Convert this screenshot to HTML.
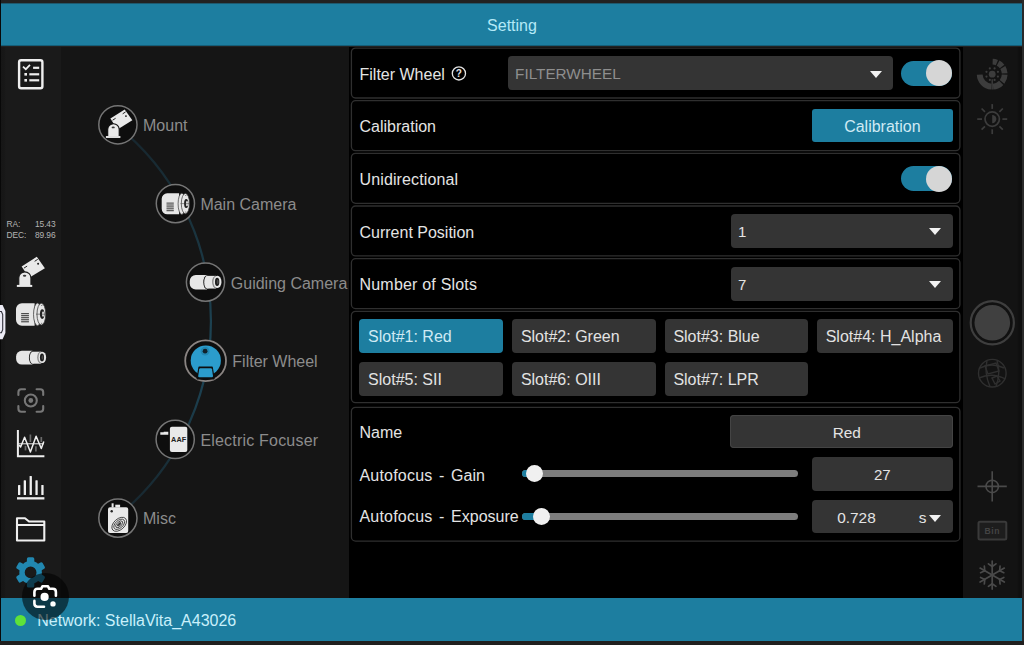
<!DOCTYPE html>
<html><head><meta charset="utf-8"><title>Setting</title>
<style>
*{box-sizing:border-box;margin:0;padding:0}
html,body{width:1024px;height:645px;overflow:hidden;background:#222;font-family:"Liberation Sans",sans-serif;}
#app{position:absolute;left:0;top:0;width:1024px;height:645px;overflow:hidden;background:#222}
.abs{position:absolute}
#hdr{left:1px;top:3px;width:1021px;height:43px;background:#1d7ea0;color:#b4e9f7;font-size:16px;text-align:center;line-height:45.2px;padding-left:1px;box-shadow:inset 0 1px 0 rgba(35,35,35,.4),inset 0 -1px 0 rgba(0,0,0,.25)}
#ftr{left:1px;top:598.2px;width:1021px;height:43.2px;background:#1d7ea0;color:#c9f0fb;font-size:16px;line-height:43px}
#lside{left:1px;top:46.5px;width:59.5px;height:552px;background:linear-gradient(90deg,#161616 0,#171717 3px,#1a1a1a 5px)}
#tree{left:60.5px;top:46.5px;width:288.5px;height:552px;background:#151515;overflow:hidden}
#main{left:349px;top:46.5px;width:614px;height:552px;background:#000}
#rside{left:963px;top:46.5px;width:59px;height:552px;background:linear-gradient(90deg,#131313 0,#131313 54px,#0f0f0f 56px)}
.panel{position:absolute;left:351px;width:609.5px;border:1px solid #2e2e2e;border-radius:5px;background:#000}
.lbl{position:absolute;left:359.5px;color:#e4e4e4;font-size:16px;line-height:20px;white-space:nowrap}
.box{position:absolute;background:#343434;border-radius:4px;color:#e4e4e4;font-size:16px}
.tri{position:absolute;width:0;height:0;border-left:6.7px solid transparent;border-right:6.7px solid transparent;border-top:7px solid #f2f2f2}
.tog{position:absolute;width:51.5px;height:25px;border-radius:13px;background:#1d7ea0}
.tog i{position:absolute;right:0;top:-0.5px;width:26px;height:26px;border-radius:13px;background:#d6d6d6}
.slot{position:absolute;height:33.9px;border-radius:4px;background:#343434;color:#e2e2e2;font-size:16px;line-height:33.6px;padding-left:8.7px;white-space:nowrap}
.node{position:absolute;color:#8c8c8c;font-size:16px;line-height:20px;white-space:nowrap}
</style></head><body>
<div id="app">
<div class="abs" style="left:0;top:0;width:1px;height:645px;background:#080808"></div>
<div class="abs" style="left:1022px;top:0;width:2px;height:645px;background:#2a2a2a"></div>
<div class="abs" style="left:0;top:641.4px;width:1024px;height:4px;background:#201f1e"></div>
<div id="hdr" class="abs">Setting</div>
<div id="lside" class="abs"></div>
<div id="tree" class="abs"></div>

<!-- tree -->
<svg class="abs" style="left:60px;top:46px" width="289" height="553" viewBox="60 46 289 553">
<defs><linearGradient id="ag" gradientUnits="userSpaceOnUse" x1="0" y1="124" x2="0" y2="518">
<stop offset="0" stop-color="#17252d"/><stop offset="0.2" stop-color="#193039"/><stop offset="0.4" stop-color="#1b3a48"/><stop offset="0.55" stop-color="#1d4454"/><stop offset="0.68" stop-color="#1c4050"/><stop offset="0.85" stop-color="#19303a"/><stop offset="1" stop-color="#17252d"/></linearGradient></defs>
<path d="M115.9 124.8 A 250.5 250.5 0 0 1 115.3 518.1" fill="none" stroke="url(#ag)" stroke-width="2.2"/>
<circle cx="117.9" cy="124.8" r="19.1" fill="#0e0e0e" stroke="#757575" stroke-width="1.5"/>
<circle cx="175.4" cy="203.6" r="19.1" fill="#0e0e0e" stroke="#757575" stroke-width="1.5"/>
<circle cx="205.5" cy="282.1" r="19.1" fill="#0e0e0e" stroke="#757575" stroke-width="1.5"/>
<circle cx="205.6" cy="360.7" r="20.4" fill="#0e0e0e" stroke="#8a8482" stroke-width="1.8"/>
<circle cx="175.2" cy="439.4" r="19.1" fill="#0e0e0e" stroke="#757575" stroke-width="1.5"/>
<circle cx="117.9" cy="518.1" r="19.1" fill="#0e0e0e" stroke="#757575" stroke-width="1.5"/>
<g transform="translate(118.3 125.2)">
<polygon points="-7.9,-6.6 6.4,-15.8 14.05,-4.85 -0.85,4.2" fill="#e9e9e9"/>
<path d="M-5.7 -5.0 L-2.7 -6.9 M4.4 -11.4 L7.3 -13.3" stroke="#0e0e0e" stroke-width="0.9" fill="none"/>
<circle cx="7.65" cy="-9.1" r="0.95" fill="#1c1c1c"/>
<path d="M-10.6 11.4 V4.35 A5.75 5.75 0 0 1 0.9 4.35 V11.4 Z" fill="#e9e9e9" stroke="#0e0e0e" stroke-width="1.1"/>
<rect x="-12.4" y="10.85" width="14.5" height="1.9" fill="#e9e9e9"/>
<ellipse cx="-5.1" cy="2.2" rx="1.6" ry="0.9" fill="#383838"/>
</g><g transform="translate(176.1 203.8)">
<path d="M-8.9 -10.5 H3 V10.5 H-8.9 A5.5 5.5 0 0 1 -14.4 5 V-5 A5.5 5.5 0 0 1 -8.9 -10.5 Z" fill="#e6e6e6"/>
<rect x="-9.6" y="-1.20" width="7.3" height="1.0" fill="#3a3a3a"/><rect x="-9.6" y="0.70" width="7.3" height="1.0" fill="#3a3a3a"/><rect x="-9.6" y="2.60" width="7.3" height="1.0" fill="#3a3a3a"/><rect x="-9.6" y="4.50" width="7.3" height="1.0" fill="#3a3a3a"/><rect x="-9.6" y="6.40" width="7.3" height="1.0" fill="#3a3a3a"/>
<ellipse cx="5.7" cy="0" rx="3.7" ry="10.6" fill="#e6e6e6" stroke="#333" stroke-width="0.7"/>
<ellipse cx="9.3" cy="-0.2" rx="4.1" ry="10.2" fill="#e6e6e6" stroke="#333" stroke-width="0.7"/>
<ellipse cx="10.1" cy="-0.3" rx="2.1" ry="4.5" fill="#222"/>
<ellipse cx="10.9" cy="-0.3" rx="1.05" ry="2.7" fill="#ddd"/>
<path d="M4.4 -0.2 H13.6" stroke="#333" stroke-width="0.5"/>
<circle cx="9.7" cy="-8.4" r="0.5" fill="#444"/><circle cx="9.7" cy="8.3" r="0.5" fill="#444"/>
</g><g transform="translate(205.5 282.2) scale(1.058)">
<path d="M-9.2 -6.85 H1.4 V6.85 H-9.2 A5.7 5.7 0 0 1 -14.9 1.15 V-1.15 A5.7 5.7 0 0 1 -9.2 -6.85 Z" fill="#e6e6e6"/>
<ellipse cx="1.4" cy="0" rx="3.5" ry="6.6" fill="#1c1c1c"/>
<rect x="1.6" y="-6" width="8.2" height="12" fill="#e6e6e6"/>
<ellipse cx="1.6" cy="0" rx="2.8" ry="6" fill="#e6e6e6"/>
<ellipse cx="9.8" cy="-0.2" rx="3.6" ry="6" fill="#8a8a8a"/>
<ellipse cx="11.3" cy="-0.3" rx="3.8" ry="5.7" fill="#e6e6e6"/>
<ellipse cx="11" cy="-0.3" rx="2.05" ry="3.9" fill="#1c1c1c"/>
<ellipse cx="11.5" cy="-0.3" rx="0.9" ry="2.2" fill="#4a4a4a"/>
</g><g transform="translate(205.6 360.7)">
<circle cx="0.2" cy="-0.2" r="15.1" fill="#2b9ccc"/>
<circle cx="-0.5" cy="-9.5" r="4.4" fill="#2288b3"/>
<circle cx="-0.5" cy="-9.5" r="2.4" fill="#10222b"/>
<path d="M-6.5 6.5 H6.5 L8.4 18 H-8.4 Z" fill="#0e0e0e" stroke="#0e0e0e" stroke-width="1.4" stroke-linejoin="round"/>
<path d="M-5.3 7.6 H5.3 Q6.2 7.6 6.4 8.6 L7.4 15.4 Q7.5 16.6 6.3 16.6 H-6.3 Q-7.5 16.6 -7.4 15.4 L-6.4 8.6 Q-6.2 7.6 -5.3 7.6 Z" fill="#2b9ccc"/>
</g><g transform="translate(175.2 439.4)">
<rect x="-5.3" y="-12.7" width="17.4" height="25.3" rx="2" fill="#e9e9e9"/>
<text x="3.4" y="2.7" font-family="Liberation Sans, sans-serif" font-weight="bold" font-size="7.3" text-anchor="middle" fill="#222">AAF</text>
<path d="M-14.9 -7.1 H-11.5 V-7.7 H-6.9 V-4.6 H-14.9 Z" fill="#e9e9e9"/>
</g><g transform="translate(117.9 518.1)">
<rect x="-9.9" y="-10.8" width="20.2" height="25.8" rx="2" fill="#e9e9e9"/>
<rect x="-6.3" y="-14.8" width="2" height="4.2" fill="#e9e9e9"/>
<rect x="-2.6" y="-13.4" width="4.8" height="2.8" fill="#e9e9e9"/>
<circle cx="-6.2" cy="-6.8" r="1.2" fill="#222"/>
<g transform="translate(1.3 6.2) rotate(-42)" fill="none" stroke="#2a2a2a" stroke-width="0.8">
<ellipse rx="8.6" ry="5.4"/><ellipse rx="6.4" ry="3.8"/><ellipse rx="4.3" ry="2.3"/><ellipse rx="2.2" ry="0.9" fill="#444"/></g>
</g>
</svg>
<div class="node" style="left:143.0px;top:115.8px">Mount</div>
<div class="node" style="left:200.4px;top:194.8px">Main Camera</div>
<div class="node" style="left:230.8px;top:273.6px">Guiding Camera</div>
<div class="node" style="left:232.3px;top:351.8px">Filter Wheel</div>
<div class="node" style="left:200.4px;top:430.6px;letter-spacing:.2px">Electric Focuser</div>
<div class="node" style="left:143.0px;top:508.8px">Misc</div>


<div id="main" class="abs"></div>
<div id="rside" class="abs"></div>
<div id="ftr" class="abs"></div>

<!-- panels -->
<svg class="abs" style="left:349px;top:46px" width="614" height="553" viewBox="349 46 614 553"><g fill="none" stroke="#2f2f2f" stroke-width="1.3"><rect x="351.4" y="48.05" width="608.5" height="49.95" rx="4.2"/><rect x="351.4" y="100.70" width="608.5" height="49.95" rx="4.2"/><rect x="351.4" y="153.35" width="608.5" height="49.95" rx="4.2"/><rect x="351.4" y="206.00" width="608.5" height="49.95" rx="4.2"/><rect x="351.4" y="258.65" width="608.5" height="49.95" rx="4.2"/><rect x="351.4" y="311.3" width="608.5" height="91.4" rx="4.2"/><rect x="351.4" y="407.3" width="608.5" height="133.8" rx="4.2"/></g></svg>

<!-- row 1 -->
<div class="lbl" style="top:64.5px">Filter Wheel</div>
<svg class="abs" style="left:450px;top:65px" width="18" height="18" viewBox="-0.9 -0.4 18 18"><circle cx="8" cy="8" r="6.6" fill="none" stroke="#e4e4e4" stroke-width="1.3"/><text x="8" y="11.6" font-size="10" font-family="Liberation Sans, sans-serif" fill="#e4e4e4" text-anchor="middle" font-weight="bold">?</text></svg>
<div class="box" style="left:508.4px;top:56.4px;width:384.6px;height:33.8px;color:#8e8e8e;font-size:15.3px;line-height:36.3px;padding-left:6.7px">FILTERWHEEL</div>
<div class="tri" style="left:869.6px;top:70.6px"></div>
<div class="tog" style="left:900.9px;top:60.6px"><i></i></div>

<!-- row 2 -->
<div class="lbl" style="top:117px">Calibration</div>
<div class="box" style="left:812px;top:109.2px;width:140.8px;height:33.2px;background:#1d7ea0;color:#cfeaf4;text-align:center;line-height:35.6px;border-radius:3px">Calibration</div>

<!-- row 3 -->
<div class="lbl" style="top:169.5px;letter-spacing:.13px">Unidirectional</div>
<div class="tog" style="left:900.9px;top:166px"><i></i></div>

<!-- row 4 -->
<div class="lbl" style="top:222.5px">Current Position</div>
<div class="box" style="left:730.5px;top:214.3px;width:222px;height:33.6px;line-height:36.5px;padding-left:7.5px;font-size:15px">1</div>
<div class="tri" style="left:929px;top:228.3px"></div>

<!-- row 5 -->
<div class="lbl" style="top:274.5px;letter-spacing:.2px">Number of Slots</div>
<div class="box" style="left:730.5px;top:267px;width:222px;height:33.6px;line-height:36.5px;padding-left:7.5px;font-size:15px">7</div>
<div class="tri" style="left:929px;top:281px"></div>

<!-- slots -->
<div class="slot" style="left:359.4px;top:319.2px;line-height:36.8px;width:144px;background:#1d7ea0;color:#cfeaf4">Slot#1: Red</div>
<div class="slot" style="left:512.2px;top:319.2px;line-height:36.8px;width:144.2px">Slot#2: Green</div>
<div class="slot" style="left:664.7px;top:319.2px;line-height:36.8px;width:143.7px">Slot#3: Blue</div>
<div class="slot" style="left:817px;top:319.2px;line-height:36.8px;width:135.8px">Slot#4: H_Alpha</div>
<div class="slot" style="left:359.4px;top:362.2px;line-height:35.8px;width:144px">Slot#5: SII</div>
<div class="slot" style="left:512.2px;top:362.2px;line-height:35.8px;width:144.2px">Slot#6: OIII</div>
<div class="slot" style="left:664.7px;top:362.2px;line-height:35.8px;width:143.7px">Slot#7: LPR</div>

<!-- bottom panel -->
<div class="lbl" style="top:422.5px">Name</div>
<div class="box" style="left:730.4px;top:414.7px;width:222.2px;height:33.6px;text-align:center;line-height:35.8px;box-shadow:inset 0 0 0 1px #444;font-size:15.4px;padding-left:10.6px">Red</div>
<div class="lbl" style="top:465.5px;word-spacing:2.2px"><span style="letter-spacing:.2px">Autofocus</span> - Gain</div>
<div class="abs" style="left:522px;top:470.2px;width:276px;height:7px;border-radius:3.5px;background:#7d7d7d"></div>
<div class="abs" style="left:522px;top:470.2px;width:14px;height:7px;border-radius:3.5px;background:#1d7ea0"></div>
<div class="abs" style="left:525.5px;top:465.3px;width:17px;height:17px;border-radius:50%;background:#f0f0f0"></div>
<div class="box" style="left:812.2px;top:457.1px;width:140.4px;height:33.6px;text-align:center;line-height:36.9px;font-size:15px">27</div>
<div class="lbl" style="top:507.3px;word-spacing:2.2px"><span style="letter-spacing:.2px">Autofocus</span> - Exposure</div>
<div class="abs" style="left:522px;top:512.6px;width:276px;height:7px;border-radius:3.5px;background:#7d7d7d"></div>
<div class="abs" style="left:522px;top:512.6px;width:20px;height:7px;border-radius:3.5px;background:#1d7ea0"></div>
<div class="abs" style="left:532.8px;top:507.7px;width:17px;height:17px;border-radius:50%;background:#f0f0f0"></div>
<div class="box" style="left:812.2px;top:499.8px;width:140.4px;height:33.6px;line-height:35.5px;font-size:15.4px"><span class="abs" style="left:25px">0.728</span><span class="abs" style="left:106.6px">s</span></div>
<div class="tri" style="left:928.6px;top:514.8px"></div>



<!-- left sidebar icons -->
<svg class="abs" style="left:0;top:46px" width="61" height="553" viewBox="0 46 61 553">
<!-- checklist -->
<rect x="19.1" y="60.3" width="23.3" height="28" rx="2" fill="none" stroke="#efefef" stroke-width="2.4"/>
<path d="M23 66.6 L25.8 69.2 L30 64.8" fill="none" stroke="#efefef" stroke-width="1.7"/>
<rect x="33.1" y="66.7" width="6.1" height="2.2" fill="#efefef"/>
<rect x="24.4" y="73" width="2.6" height="2.6" fill="#efefef"/><rect x="29.3" y="73.2" width="9.9" height="2.2" fill="#efefef"/>
<rect x="24.4" y="79" width="2.6" height="2.6" fill="#efefef"/><rect x="29.3" y="79.2" width="9.9" height="2.2" fill="#efefef"/>
<!-- edge handle -->
<path d="M-4 305 L2.6 305 L5.4 311 L5.4 333 L2.6 339.3 L-4 339.3 Z" fill="#ecebf5"/>
<path d="M-1 311.5 L1.4 311.5 L2.7 314.5 V329.7 L1.4 332.7 L-1 332.7" fill="none" stroke="#30303a" stroke-width="1.1"/>
<g transform="translate(30 273.4) scale(1.06)">
<polygon points="-7.9,-6.6 6.4,-15.8 14.05,-4.85 -0.85,4.2" fill="#e9e9e9"/>
<path d="M-5.7 -5.0 L-2.7 -6.9 M4.4 -11.4 L7.3 -13.3" stroke="#1a1a1a" stroke-width="0.9" fill="none"/>
<circle cx="7.65" cy="-9.1" r="0.95" fill="#1c1c1c"/>
<path d="M-10.6 11.4 V4.35 A5.75 5.75 0 0 1 0.9 4.35 V11.4 Z" fill="#e9e9e9" stroke="#1b1b1b" stroke-width="1.1"/>
<rect x="-12.4" y="10.85" width="14.5" height="1.9" fill="#e9e9e9"/>
<ellipse cx="-5.1" cy="2.2" rx="1.6" ry="0.9" fill="#383838"/>
</g>
<g transform="translate(31.4 314.4) scale(1.07)">
<path d="M-8.9 -10.5 H3 V10.5 H-8.9 A5.5 5.5 0 0 1 -14.4 5 V-5 A5.5 5.5 0 0 1 -8.9 -10.5 Z" fill="#e6e6e6"/>
<rect x="-9.6" y="-1.20" width="7.3" height="1.0" fill="#3a3a3a"/><rect x="-9.6" y="0.70" width="7.3" height="1.0" fill="#3a3a3a"/><rect x="-9.6" y="2.60" width="7.3" height="1.0" fill="#3a3a3a"/><rect x="-9.6" y="4.50" width="7.3" height="1.0" fill="#3a3a3a"/><rect x="-9.6" y="6.40" width="7.3" height="1.0" fill="#3a3a3a"/>
<ellipse cx="5.7" cy="0" rx="3.7" ry="10.6" fill="#e6e6e6" stroke="#333" stroke-width="0.7"/>
<ellipse cx="9.3" cy="-0.2" rx="4.1" ry="10.2" fill="#e6e6e6" stroke="#333" stroke-width="0.7"/>
<ellipse cx="10.1" cy="-0.3" rx="2.1" ry="4.5" fill="#222"/>
<ellipse cx="10.9" cy="-0.3" rx="1.05" ry="2.7" fill="#ddd"/>
<path d="M4.4 -0.2 H13.6" stroke="#333" stroke-width="0.5"/>
<circle cx="9.7" cy="-8.4" r="0.5" fill="#444"/><circle cx="9.7" cy="8.3" r="0.5" fill="#444"/>
</g>
<g transform="translate(31 357.7) scale(1.0)">
<path d="M-9.2 -6.85 H1.4 V6.85 H-9.2 A5.7 5.7 0 0 1 -14.9 1.15 V-1.15 A5.7 5.7 0 0 1 -9.2 -6.85 Z" fill="#e6e6e6"/>
<ellipse cx="1.4" cy="0" rx="3.5" ry="6.6" fill="#1c1c1c"/>
<rect x="1.6" y="-6" width="8.2" height="12" fill="#e6e6e6"/>
<ellipse cx="1.6" cy="0" rx="2.8" ry="6" fill="#e6e6e6"/>
<ellipse cx="9.8" cy="-0.2" rx="3.6" ry="6" fill="#8a8a8a"/>
<ellipse cx="11.3" cy="-0.3" rx="3.8" ry="5.7" fill="#e6e6e6"/>
<ellipse cx="11" cy="-0.3" rx="2.05" ry="3.9" fill="#1c1c1c"/>
<ellipse cx="11.5" cy="-0.3" rx="0.9" ry="2.2" fill="#4a4a4a"/>
</g>
<!-- focus -->
<g fill="none" stroke="#777" stroke-width="2.1" stroke-linecap="round">
<path d="M18.4 395 V392.2 Q18.4 389.3 21.3 389.3 H25"/><path d="M36.6 389.3 H40.3 Q43.2 389.3 43.2 392.2 V395"/>
<path d="M18.4 406 V408.8 Q18.4 411.8 21.3 411.8 H25"/><path d="M36.6 411.8 H40.3 Q43.2 411.8 43.2 408.8 V406"/>
<circle cx="30.8" cy="400.5" r="6"/></g>
<circle cx="30.8" cy="400.5" r="2.4" fill="#777"/>
<!-- graph -->
<g stroke="#6a6a6a" stroke-width="1.7"><path d="M30.4 434.5 V442"/><path d="M25.5 445.8 V450.4"/><path d="M35.9 446.2 V451.6"/><path d="M41.3 437 V442"/></g>
<path d="M17.9 429.9 V456.2 H44.4" fill="none" stroke="#efefef" stroke-width="2"/>
<path d="M18.5 443.8 H43.8" stroke="#efefef" stroke-width="1"/>
<path d="M19.2 445 L20.6 447 L24.6 437.3 L30.4 452 L36.1 436.2 L41.3 448.5 L43.8 441.6" fill="none" stroke="#efefef" stroke-width="1.5" stroke-linejoin="round"/>
<!-- histogram -->
<rect x="17" y="497.2" width="27.4" height="2.3" fill="#efefef"/>
<rect x="18" y="485" width="2.3" height="10" rx="0.6" fill="#efefef"/>
<rect x="23.7" y="480.2" width="2.3" height="14.8" rx="0.6" fill="#efefef"/>
<rect x="29.6" y="476" width="2.3" height="19" rx="0.6" fill="#efefef"/>
<rect x="35.4" y="480.2" width="2.3" height="14.8" rx="0.6" fill="#efefef"/>
<rect x="41.3" y="485" width="2.3" height="10" rx="0.6" fill="#efefef"/>
<!-- folder -->
<path d="M17 518.3 H25 L29 521.5 H44.3 V540.5 H17 Z" fill="none" stroke="#efefef" stroke-width="2.1" stroke-linejoin="round"/>
<path d="M17 525 H44.3" stroke="#efefef" stroke-width="2"/>
<!-- gear -->
<g transform="translate(30.6 572.4)" fill="#2187b0"><circle r="8.6" fill="none" stroke="#2187b0" stroke-width="5.4"/><rect x="-3.7" y="-15.1" width="7.4" height="7.4" rx="1.6" transform="rotate(0)"/><rect x="-3.7" y="-15.1" width="7.4" height="7.4" rx="1.6" transform="rotate(60)"/><rect x="-3.7" y="-15.1" width="7.4" height="7.4" rx="1.6" transform="rotate(120)"/><rect x="-3.7" y="-15.1" width="7.4" height="7.4" rx="1.6" transform="rotate(180)"/><rect x="-3.7" y="-15.1" width="7.4" height="7.4" rx="1.6" transform="rotate(240)"/><rect x="-3.7" y="-15.1" width="7.4" height="7.4" rx="1.6" transform="rotate(300)"/></g>
</svg>
<div class="abs" style="left:6.5px;top:219.2px;width:49px;font-size:8.4px;line-height:11px;color:#b4b4b4;letter-spacing:-0.1px"><div>RA:<span style="float:right">15.43</span></div><div>DEC:<span style="float:right">89.96</span></div></div>


<!-- right sidebar icons -->
<svg class="abs" style="left:962px;top:46px" width="61" height="553" viewBox="962 46 61 553">
<path d="M992.74 58.81 A15.4 15.4 0 0 1 997.97 59.92 L995.80 65.30 A9.6 9.6 0 0 0 992.54 64.61 Z" fill="#3c3c3c"/><path d="M999.43 60.60 A15.4 15.4 0 0 1 1004.34 64.72 L999.76 68.29 A9.6 9.6 0 0 0 996.71 65.72 Z" fill="#3c3c3c"/><path d="M1005.26 66.04 A15.4 15.4 0 0 1 1007.56 73.13 L1001.78 73.53 A9.6 9.6 0 0 0 1000.34 69.11 Z" fill="#3c3c3c"/><path d="M1007.59 74.74 A15.4 15.4 0 0 1 1004.34 83.68 L999.76 80.11 A9.6 9.6 0 0 0 1001.79 74.54 Z" fill="#3c3c3c"/><path d="M1003.28 84.90 A15.4 15.4 0 0 1 993.27 89.56 L992.87 83.78 A9.6 9.6 0 0 0 999.11 80.87 Z" fill="#3c3c3c"/><path d="M991.13 89.56 A15.4 15.4 0 0 1 976.81 74.74 L982.61 74.54 A9.6 9.6 0 0 0 991.53 83.78 Z" fill="#3c3c3c"/><circle cx="992.2" cy="74.2" r="3.4" fill="#3c3c3c"/><circle cx="997.93" cy="76.57" r="1.1" fill="#3c3c3c"/><circle cx="994.57" cy="79.93" r="1.1" fill="#3c3c3c"/><circle cx="989.83" cy="79.93" r="1.1" fill="#3c3c3c"/><circle cx="986.47" cy="76.57" r="1.1" fill="#3c3c3c"/><circle cx="986.47" cy="71.83" r="1.1" fill="#3c3c3c"/><circle cx="989.83" cy="68.47" r="1.1" fill="#3c3c3c"/><circle cx="994.57" cy="68.47" r="1.1" fill="#3c3c3c"/><circle cx="997.93" cy="71.83" r="1.1" fill="#3c3c3c"/><path d="M992.2 79.2 V89.4" stroke="#3c3c3c" stroke-width="1.4"/>
<circle cx="992.2" cy="119.1" r="7.2" fill="none" stroke="#3c3c3c" stroke-width="1.7"/><path d="M992.2 114.89999999999999 A4.2 4.2 0 0 1 992.2 123.3 Z" fill="#3c3c3c"/><path d="M1002.40 119.10 L1007.20 119.10" stroke="#3c3c3c" stroke-width="1.7"/><path d="M999.41 126.31 L1002.81 129.71" stroke="#3c3c3c" stroke-width="1.7"/><path d="M992.20 129.30 L992.20 134.10" stroke="#3c3c3c" stroke-width="1.7"/><path d="M984.99 126.31 L981.59 129.71" stroke="#3c3c3c" stroke-width="1.7"/><path d="M982.00 119.10 L977.20 119.10" stroke="#3c3c3c" stroke-width="1.7"/><path d="M984.99 111.89 L981.59 108.49" stroke="#3c3c3c" stroke-width="1.7"/><path d="M992.20 108.90 L992.20 104.10" stroke="#3c3c3c" stroke-width="1.7"/><path d="M999.41 111.89 L1002.81 108.49" stroke="#3c3c3c" stroke-width="1.7"/>
<circle cx="992.3" cy="322.8" r="21.6" fill="#111" stroke="#3e3e3e" stroke-width="2.2"/><circle cx="992.3" cy="322.8" r="17.8" fill="#404040"/>
<g fill="none" stroke="#2f2f2f" stroke-width="1.4"><circle cx="992.3" cy="373.2" r="13.8"/><path d="M980 368 Q992 362 1004 368"/><path d="M979 378 Q992 372 1005.5 379"/><path d="M987 360.5 Q984 373 990 386.5"/><path d="M997 360.5 Q1001 373 996 386.5"/><path d="M985 366 L996 363 L999 371 L988 374 Z"/><path d="M992 378 l5 -2 l3 5 l-5 3 z"/></g>
<g fill="none" stroke="#4a4a4a" stroke-width="1.6"><circle cx="992.2" cy="486.4" r="6.2"/><path d="M977.5 486.4 H1006.8 M992.2 471.3 V501.5"/></g>
<rect x="978.5" y="521.8" width="27.8" height="17.8" rx="1.5" fill="#1d1d1d" stroke="#3a3a3a" stroke-width="2"/><text x="992.4" y="533.8" font-family="Liberation Sans, sans-serif" font-weight="bold" font-size="8.6" text-anchor="middle" fill="#444" letter-spacing="0.6">Bin</text>
<g fill="none" stroke="#4a4a4a" stroke-width="1.7" stroke-linecap="round"><path d="M992.2 575.1 L992.20 561.10"/><path d="M992.20 566.50 L988.43 563.86"/><path d="M992.20 566.50 L995.97 563.86"/><path d="M992.2 575.1 L1004.32 568.10"/><path d="M999.65 570.80 L1000.05 566.22"/><path d="M999.65 570.80 L1003.82 572.74"/><path d="M992.2 575.1 L1004.32 582.10"/><path d="M999.65 579.40 L1003.82 577.46"/><path d="M999.65 579.40 L1000.05 583.98"/><path d="M992.2 575.1 L992.20 589.10"/><path d="M992.20 583.70 L995.97 586.34"/><path d="M992.20 583.70 L988.43 586.34"/><path d="M992.2 575.1 L980.08 582.10"/><path d="M984.75 579.40 L984.35 583.98"/><path d="M984.75 579.40 L980.58 577.46"/><path d="M992.2 575.1 L980.08 568.10"/><path d="M984.75 570.80 L980.58 572.74"/><path d="M984.75 570.80 L984.35 566.22"/></g>
</svg>


<!-- footer -->
<div class="abs" style="left:14.6px;top:614.7px;width:11.2px;height:11.2px;border-radius:50%;background:#5ee23a"></div>
<div class="abs" style="left:37.3px;top:609.5px;font-size:16px;line-height:22px;color:#c9f0fb;white-space:nowrap">Network: StellaVita_A43026</div>
<!-- lens overlay -->
<div class="abs" style="left:21.6px;top:572.6px;width:47.3px;height:47.3px;border-radius:50%;background:rgba(0,0,0,0.56)"></div>
<svg class="abs" style="left:21px;top:572px" width="50" height="50" viewBox="-0.7 -0.3 50 50">
<g fill="none" stroke="#fff" stroke-width="2.6" stroke-linecap="round" stroke-linejoin="round">
<path d="M12.7 23.4 V19.6 Q12.7 16.5 15.8 16.5 H19.4 L20.7 14 H26.3 L27.6 16.5 H31.1 Q34.2 16.5 34.2 19.6 V23.4"/>
<path d="M12.7 28.6 V31.3 Q12.7 34.4 15.8 34.4 H22.3"/></g>
<circle cx="22.9" cy="24.6" r="4.1" fill="#fff"/><circle cx="31.3" cy="31.6" r="2.7" fill="#fff"/>
</svg>

</div>
</body></html>
